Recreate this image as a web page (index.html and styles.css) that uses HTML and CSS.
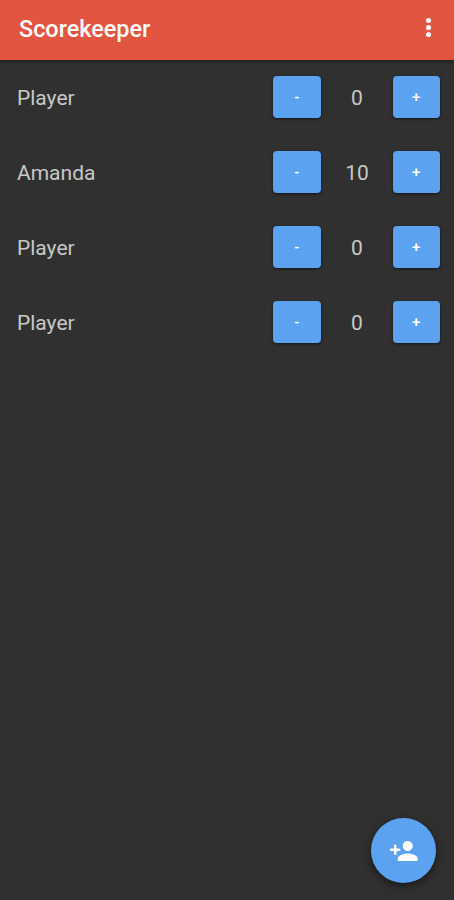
FILE: index.html
```html
<!DOCTYPE html>
<html lang="en">
<head>
    <meta charset="UTF-8">
    <meta name="viewport" content="width=device-width, initial-scale=1.0">
    <title>Scorekeeper</title>
    <link rel="stylesheet" href="styles.css">
</head>
<body>
    <div class="toolbar">
        <div class="title">Scorekeeper</div>
        <button class="menu-button" aria-label="More options">
            <span class="dot"></span>
            <span class="dot"></span>
            <span class="dot"></span>
        </button>
    </div>

    <div class="player-list">
        <div class="player-row">
            <div class="player-name">Player</div>
            <button class="score-button">-</button>
            <div class="score">0</div>
            <button class="score-button">+</button>
        </div>
        <div class="player-row">
            <div class="player-name">Amanda</div>
            <button class="score-button">-</button>
            <div class="score">10</div>
            <button class="score-button">+</button>
        </div>
        <div class="player-row">
            <div class="player-name">Player</div>
            <button class="score-button">-</button>
            <div class="score">0</div>
            <button class="score-button">+</button>
        </div>
        <div class="player-row">
            <div class="player-name">Player</div>
            <button class="score-button">-</button>
            <div class="score">0</div>
            <button class="score-button">+</button>
        </div>
    </div>

    <!-- Add player -->
    <button class="fab" aria-label="Add player">
        <svg width="30" height="30" viewBox="0 0 24 24" fill="#fff">
            <path d="M15 12c2.21 0 4-1.79 4-4s-1.79-4-4-4-4 1.79-4 4 1.79 4 4 4zm-9-2V7H4v3H1v2h3v3h2v-3h3v-2H6zm9 4c-2.67 0-8 1.34-8 4v2h16v-2c0-2.66-5.33-4-8-4z"/>
        </svg>
    </button>
</body>
</html>
```

FILE: styles.css
```css
body {
    margin: 0;
    padding: 0;
    font-family: Roboto, "Liberation Sans", sans-serif;
    background: #303030;
    height: 900px;
    overflow: hidden;
    position: relative;
}

.toolbar {
    height: 60px;
    background: #e25541;
    display: flex;
    justify-content: space-between;
    align-items: center;
    padding: 0 16px 0 19px;
    box-shadow: 0 1px 3px rgba(0, 0, 0, 0.5);
}

.title {
    padding-bottom: 2px;
    font-size: 23.4px;
    font-weight: 500;
    color: #fff;
}

.menu-button {
    width: 20px;
    padding: 0 0 5px;
    border: none;
    background: none;
    display: flex;
    flex-direction: column;
    align-items: center;
    gap: 2px;
}

.dot {
    width: 5px;
    height: 5px;
    border-radius: 50%;
    background: #fff;
}

.player-list {
    padding: 0 14px 0 17px;
    margin-top: -1px;
}

.player-row {
    height: 75px;
    display: flex;
    align-items: center;
}

.player-name {
    flex: 1;
    padding-top: 2px;
    font-size: 21px;
    color: #c8c8c8;
}

.score-button {
    width: 47.5px;
    height: 42px;
    padding: 0;
    border: none;
    border-radius: 4px;
    background: #5ba3f1;
    color: #fff;
    font-family: inherit;
    font-size: 15px;
    font-weight: 500;
    box-shadow: 0 1px 3px rgba(0, 0, 0, 0.6);
}

.score {
    width: 72px;
    padding: 2px 0 0 1px;
    box-sizing: border-box;
    text-align: center;
    font-size: 21px;
    color: #c8c8c8;
}

.fab {
    position: absolute;
    left: 371px;
    top: 818px;
    width: 65px;
    height: 65px;
    padding: 0;
    border: none;
    border-radius: 50%;
    background: #5ba3f1;
    display: flex;
    justify-content: center;
    align-items: center;
    box-shadow: 0 3px 8px rgba(0, 0, 0, 0.5);
}
```
